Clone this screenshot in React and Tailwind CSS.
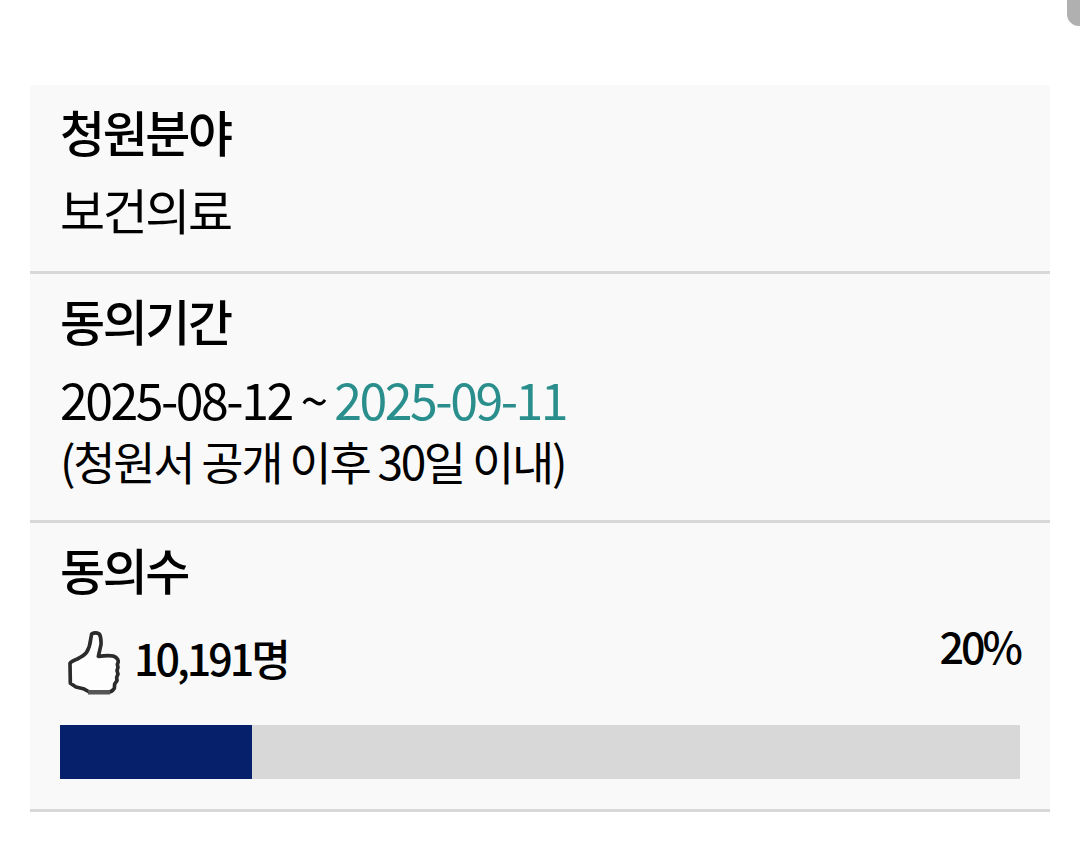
function Section({ title, className, children }) {
  return (
    <section className={`border-b-3 border-[#d8d8d8] px-[30px] pt-[13px] ${className}`}>
      <h2 className="text-[49px] leading-[66px] font-medium tracking-tighter">{title}</h2>
      {children}
    </section>
  );
}

function ThumbIcon() {
  return (
    <svg viewBox="60 60 180 198" className="h-[66px] w-[60px]" fill="none" stroke="#2b2b2b" strokeWidth="11" strokeLinejoin="round" strokeLinecap="round">
      <path
        fill="#fdfdfd"
        d="M155 72 Q166 65 178 72 Q184 82 183 104 L175 139 Q206 135 219 138 Q234 143 235 155 L232 163 L234 172 L231 182 L234 192 L230 202 L231 212 L224 222 L223 235 Q216 246 207 246 L148 246 L130 236 L108 231 L91 220 L90 160 Q94 154 112 147 Q132 137 139 128 Q150 111 152 88 Z"
      />
      <path stroke="#555" strokeWidth="13" strokeLinecap="butt" d="M144 247 H210" />
    </svg>
  );
}

export default function App() {
  const percent = 20;

  return (
    <main className="relative min-h-screen bg-white px-[30px] pt-[85px] font-['Noto_Sans_CJK_KR',sans-serif] text-black">
      <div className="absolute top-0 right-0 h-[26px] w-[13px] rounded-bl-xl bg-[#b0b0b0]" />
      <div className="bg-[#f9f9f9]">
        <Section title="청원분야" className="pb-[31px]">
          <p className="mt-[14px] text-[49px] leading-[62px] tracking-tighter">보건의료</p>
        </Section>
        <Section title="동의기간" className="pb-[29px]">
          <p className="mt-[14px] text-[50px] leading-[62px] tracking-tighter">
            2025-08-12 ~ <span className="text-[#2a8f8c]">2025-09-11</span>
          </p>
          <p className="text-[46px] leading-[62px] tracking-tighter">(청원서 공개 이후 30일 이내)</p>
        </Section>
        <Section title="동의수" className="pb-[30px]">
          <div className="mt-4 flex items-start justify-between text-[43px] leading-[54px] font-medium tracking-[-3px]">
            <div className="flex items-start gap-[14px] pt-3">
              <ThumbIcon />
              <span>10,191명</span>
            </div>
            <span>{percent}%</span>
          </div>
          <div
            role="progressbar"
            aria-valuenow={percent}
            aria-valuemin={0}
            aria-valuemax={100}
            aria-label="동의수"
            className="mt-[29px] h-[54px] bg-[#d8d8d8]"
          >
            <div className="h-full bg-[#06206c]" style={{ width: `${percent}%` }} />
          </div>
        </Section>
      </div>
    </main>
  );
}
